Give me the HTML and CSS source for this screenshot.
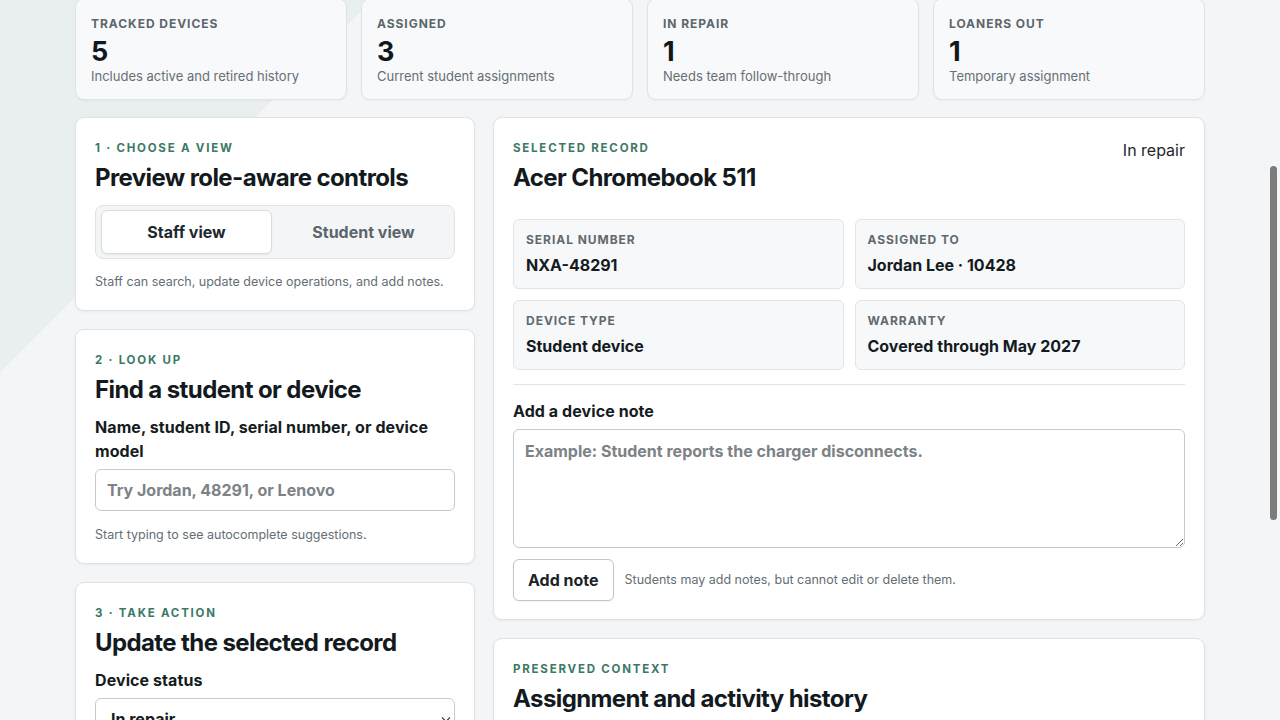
FILE: index.html
```html
<!DOCTYPE html>
<html lang="en">
<head>
    <meta charset="UTF-8">
    <meta name="viewport" content="width=device-width, initial-scale=1.0">
    <title>Device Desk</title>
    <link rel="stylesheet" href="styles.css">
</head>
<body>
    <div class="scroll-thumb"></div>
    <main class="page">
        <section class="stats">
            <div class="stat">
                <div class="stat-label">Tracked devices</div>
                <div class="stat-value">5</div>
                <div class="stat-note">Includes active and retired history</div>
            </div>
            <div class="stat">
                <div class="stat-label">Assigned</div>
                <div class="stat-value">3</div>
                <div class="stat-note">Current student assignments</div>
            </div>
            <div class="stat">
                <div class="stat-label">In repair</div>
                <div class="stat-value">1</div>
                <div class="stat-note">Needs team follow-through</div>
            </div>
            <div class="stat">
                <div class="stat-label">Loaners out</div>
                <div class="stat-value">1</div>
                <div class="stat-note">Temporary assignment</div>
            </div>
        </section>

        <div class="layout">
            <div class="steps">
                <section class="card">
                    <p class="kicker">1 · Choose a view</p>
                    <h2 class="card-title">Preview role-aware controls</h2>
                    <div class="segmented">
                        <button class="segment is-active" type="button">Staff view</button>
                        <button class="segment" type="button">Student view</button>
                    </div>
                    <p class="hint">Staff can search, update device operations, and add notes.</p>
                </section>

                <section class="card">
                    <p class="kicker">2 · Look up</p>
                    <h2 class="card-title">Find a student or device</h2>
                    <label for="lookup" class="field-label">Name, student ID, serial number, or device model</label>
                    <input type="text" id="lookup" class="text-input" placeholder="Try Jordan, 48291, or Lenovo">
                    <p class="hint hint-gap">Start typing to see autocomplete suggestions.</p>
                </section>

                <section class="card">
                    <p class="kicker">3 · Take action</p>
                    <h2 class="card-title">Update the selected record</h2>
                    <label for="status" class="field-label">Device status</label>
                    <div class="select-wrap">
                        <select id="status" class="select">
                            <option>In repair</option>
                            <option>Assigned</option>
                            <option>Loaner out</option>
                            <option>Retired</option>
                        </select>
                        <svg class="select-arrow" width="10" height="7" viewBox="0 0 10 7"><path d="M1 1.5l4 4 4-4" fill="none" stroke="#3a4246" stroke-width="1.2"/></svg>
                    </div>
                    <p class="hint hint-gap">Status changes are saved to the device history.</p>
                </section>
            </div>

            <div class="record-column">
                <section class="card">
                    <div class="record-head">
                        <div>
                            <p class="kicker">Selected record</p>
                            <h2 class="card-title">Acer Chromebook 511</h2>
                        </div>
                        <span class="record-status">In repair</span>
                    </div>
                    <div class="facts">
                        <div class="fact">
                            <div class="fact-label">Serial number</div>
                            <div class="fact-value">NXA-48291</div>
                        </div>
                        <div class="fact">
                            <div class="fact-label">Assigned to</div>
                            <div class="fact-value">Jordan Lee · 10428</div>
                        </div>
                        <div class="fact">
                            <div class="fact-label">Device type</div>
                            <div class="fact-value">Student device</div>
                        </div>
                        <div class="fact">
                            <div class="fact-label">Warranty</div>
                            <div class="fact-value">Covered through May 2027</div>
                        </div>
                    </div>
                    <hr class="divider">
                    <label for="note" class="field-label field-label-tight">Add a device note</label>
                    <textarea id="note" class="note-input" placeholder="Example: Student reports the charger disconnects."></textarea>
                    <div class="note-actions">
                        <button class="btn" type="button">Add note</button>
                        <span class="hint">Students may add notes, but cannot edit or delete them.</span>
                    </div>
                </section>

                <section class="card">
                    <p class="kicker">Preserved context</p>
                    <h2 class="card-title">Assignment and activity history</h2>
                    <p class="hint hint-gap">Every assignment, repair and note stays attached to the device.</p>
                </section>
            </div>
        </div>
    </main>
</body>
</html>
```

FILE: styles.css
```css
* {
    box-sizing: border-box;
}
html {
    overflow: hidden;
}
body {
    margin: 0;
    background: #f3f5f7;
    color: #161d21;
    font-family: Inter, "Noto Sans", sans-serif;
    position: relative;
}
body::before {
    content: '';
    position: absolute;
    top: 0;
    left: 0;
    width: 372px;
    height: 372px;
    background: linear-gradient(135deg, #e9eeef 50%, transparent 50%);
}
.scroll-thumb {
    position: fixed;
    top: 166px;
    right: 3px;
    width: 7px;
    height: 354px;
    border-radius: 4px;
    background: #7b7b7c;
    z-index: 5;
}
.page {
    position: relative;
    max-width: 1130px;
    margin: 0 auto;
}
.stats {
    display: grid;
    grid-template-columns: repeat(4, 1fr);
    gap: 14px;
    margin-top: -2px;
}
.stat {
    background: #f8f9fa;
    border: 1px solid #dfe3e6;
    border-radius: 9px;
    padding: 17px 15px 14px;
    box-shadow: 0 1px 2px rgba(20, 30, 40, 0.04);
}
.stat-label {
    font-size: 12px;
    line-height: 16px;
    font-weight: 700;
    letter-spacing: 0.08em;
    text-transform: uppercase;
    color: #5b666d;
}
.stat-value {
    margin-top: 4px;
    font-size: 27px;
    line-height: 32px;
    font-weight: 700;
    color: #11181c;
}
.stat-note {
    margin-top: -1px;
    font-size: 13px;
    line-height: 18px;
    color: #656f75;
}
.layout {
    display: grid;
    grid-template-columns: 400px 1fr;
    gap: 18px;
    margin-top: 17px;
    align-items: start;
}
.steps,
.record-column {
    display: flex;
    flex-direction: column;
    gap: 18px;
}
.card {
    background: #fff;
    border: 1px solid #dfe3e6;
    border-radius: 9px;
    padding: 21px 19px 18px;
    box-shadow: 0 1px 3px rgba(20, 30, 40, 0.05);
}
.kicker {
    margin: 0;
    font-size: 11.5px;
    line-height: 18px;
    font-weight: 700;
    letter-spacing: 0.155em;
    text-transform: uppercase;
    color: #3b7965;
}
.card-title {
    margin: 6px 0 0;
    font-size: 24px;
    line-height: 30px;
    font-weight: 700;
    letter-spacing: -0.025em;
    color: #131a1e;
}
.segmented {
    display: grid;
    grid-template-columns: 1fr 1fr;
    gap: 6px;
    margin-top: 12px;
    padding: 4px 5px;
    background: #f3f5f6;
    border: 1px solid #dfe3e6;
    border-radius: 8px;
}
.segment {
    height: 44px;
    border: 1px solid transparent;
    border-radius: 6px;
    background: #f3f5f6;
    font-family: inherit;
    font-size: 16px;
    font-weight: 700;
    color: #5b656b;
}
.segment.is-active {
    background: #fff;
    border-color: #d8dde0;
    color: #1d282e;
    box-shadow: 0 1px 2px rgba(20, 30, 40, 0.06);
}
.hint {
    margin: 13px 0 0;
    font-size: 12.5px;
    line-height: 20px;
    color: #646e74;
}
.hint-gap {
    margin-top: 14px;
}
.field-label {
    display: block;
    margin-top: 10px;
    font-size: 16px;
    line-height: 24px;
    font-weight: 700;
    letter-spacing: 0.005em;
    color: #151c20;
}
.text-input,
.select {
    display: block;
    width: 100%;
    height: 42px;
    margin-top: 6px;
    padding: 0 11px;
    border: 1px solid #c5cacd;
    border-radius: 6px;
    background: #fff;
    font-family: inherit;
    font-size: 16px;
    font-weight: 700;
    color: #151c20;
}
.text-input::placeholder,
.note-input::placeholder {
    color: #7d8286;
    font-weight: 700;
}
.select-wrap {
    position: relative;
}
.select {
    appearance: none;
    padding-left: 15px;
}
.select-arrow {
    position: absolute;
    right: 4px;
    top: 18px;
}
.record-head {
    display: flex;
    justify-content: space-between;
    align-items: flex-start;
}
.record-status {
    margin-top: -1px;
    font-size: 16px;
    line-height: 24px;
    color: #1f272b;
}
.facts {
    display: grid;
    grid-template-columns: 1fr 1fr;
    gap: 11px;
    margin-top: 26px;
}
.fact {
    background: #f7f8f9;
    border: 1px solid #e1e5e8;
    border-radius: 6px;
    padding: 12px 12px;
}
.fact-label {
    font-size: 12px;
    line-height: 16px;
    font-weight: 700;
    letter-spacing: 0.08em;
    text-transform: uppercase;
    color: #5f6a70;
}
.fact-value {
    margin-top: 6px;
    font-size: 16px;
    line-height: 22px;
    font-weight: 700;
    color: #141b1f;
}
.divider {
    margin: 14px 0 0;
    border: 0;
    border-top: 1px solid #e1e5e8;
}
.field-label-tight {
    margin-top: 14px;
}
.note-input {
    display: block;
    width: 100%;
    height: 119px;
    margin-top: 6px;
    padding: 10px 11px;
    border: 1px solid #c5cacd;
    border-radius: 6px;
    font-family: inherit;
    font-size: 16px;
    line-height: 22px;
    font-weight: 700;
    resize: vertical;
}
.note-actions {
    display: flex;
    align-items: center;
    gap: 11px;
    margin-top: 11px;
}
.note-actions .hint {
    margin: 0;
}
.btn {
    height: 42px;
    padding: 0 14px;
    border: 1px solid #c2c7cb;
    border-radius: 6px;
    background: #fff;
    font-family: inherit;
    font-size: 16px;
    font-weight: 700;
    color: #1b2327;
    box-shadow: 0 1px 2px rgba(20, 30, 40, 0.06);
}
```
